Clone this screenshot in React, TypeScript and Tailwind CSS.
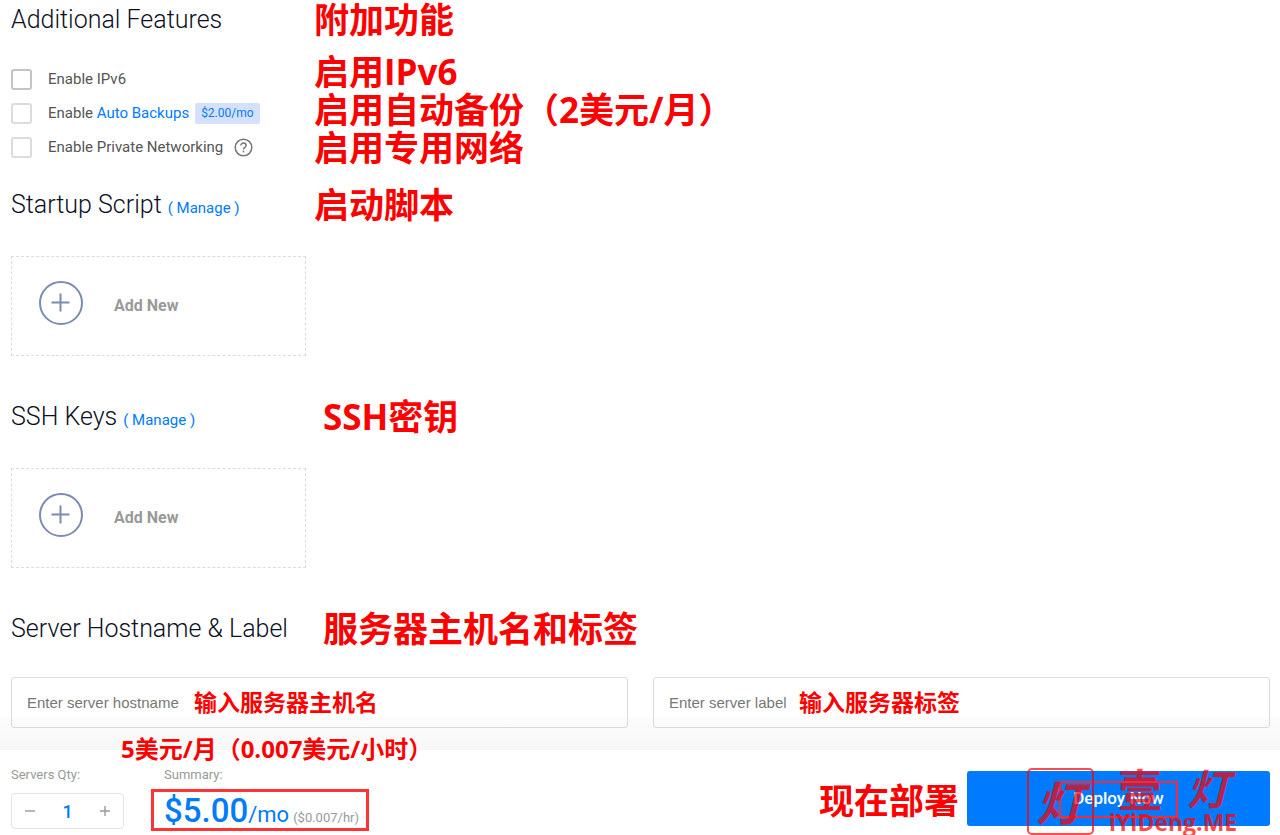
import { useState } from 'react';
import type { ReactNode } from 'react';

const features = [
  { id: 'ipv6', text: 'IPv6', border: 'border-[#c4c4c4]' },
  { id: 'backups', link: 'Auto Backups', badge: '$2.00/mo', border: 'border-[#dcdcdc]' },
  { id: 'private', text: 'Private Networking', help: true, border: 'border-[#dcdcdc]' },
];

const featureNotes = ['启用IPv6', '启用自动备份（2美元/月）', '启用专用网络'];

const noteSizes = {
  lg: 'text-[35px] leading-[38px]',
  md: 'text-[24px] leading-[28px]',
  sm: 'text-[23px] leading-[28px]',
};

function Note({
  size = 'lg',
  className = '',
  children,
}: {
  size?: keyof typeof noteSizes;
  className?: string;
  children: ReactNode;
}) {
  return (
    <span
      className={`whitespace-nowrap font-['Open_Sans','Noto_Sans_CJK_SC',sans-serif] font-bold text-[#ff0000] ${noteSizes[size]} ${className}`}
    >
      {children}
    </span>
  );
}

function SectionHeading({
  title,
  note,
  manage,
  width = 'w-[303px]',
}: {
  title: string;
  note: string;
  manage?: boolean;
  width?: string;
}) {
  return (
    <div className="flex h-10 items-center">
      <div className={`flex shrink-0 items-baseline gap-1.5 ${width}`}>
        <h2 className="whitespace-nowrap text-[25px] leading-10 font-[350] text-[#0c1024]">{title}</h2>
        {manage && (
          <a href="#manage" className="whitespace-nowrap text-[15px] text-[#007bfc]">
            ( Manage )
          </a>
        )}
      </div>
      <Note>{note}</Note>
    </div>
  );
}

function HelpIcon() {
  return (
    <svg className="ml-[11px] size-[19px]" viewBox="0 0 19 19" fill="none" stroke="#777" strokeWidth="1.5">
      <circle cx="9.5" cy="9.5" r="8.3" />
      <path d="M6.9 7.6c0-1.5 1.1-2.5 2.6-2.5s2.6.9 2.6 2.3c0 2-2.6 2-2.6 4.1" />
      <path d="M9.5 12.7v1.7" />
    </svg>
  );
}

function AddNew() {
  return (
    <button
      type="button"
      className="mt-[31px] mb-[41px] flex h-[100px] w-[295px] items-start gap-[31px] border border-dashed border-[#dcdcdc] pt-6 pl-[27px]"
    >
      <svg className="size-[44px]" viewBox="0 0 44 44" fill="none" stroke="#7b8cb0" strokeWidth="2">
        <circle cx="22" cy="22" r="21" />
        <path d="M12.5 21.5h18M21.5 12.5v18" />
      </svg>
      <span className="text-[16px] leading-[50px] font-bold text-[#999]">Add New</span>
    </button>
  );
}

function HostField({ id, label, note, noteClass }: { id: string; label: string; note: string; noteClass: string }) {
  return (
    <div className="relative">
      <input
        id={id}
        aria-label={label}
        placeholder={label}
        className="block h-[51px] w-full rounded-[3px] border border-[#dcdcdc] bg-white px-[15px] font-['Liberation_Sans',sans-serif] text-[15px] text-[#444] placeholder:text-[#777]"
      />
      <Note size="sm" className={`pointer-events-none absolute top-[11px] ${noteClass}`}>
        {note}
      </Note>
    </div>
  );
}

function Watermark() {
  return (
    <svg
      className="pointer-events-none absolute top-[-4px] left-[58px] h-[72px] w-[226px]"
      viewBox="0 0 226 72"
      aria-hidden="true"
    >
      <rect x="35" y="15" width="117" height="35" fill="none" stroke="#f52b36" strokeWidth="2" />
      <g opacity="0.7" fill="#ff0000" fontFamily="'Noto Sans CJK SC', sans-serif" fontWeight="700">
        <rect x="3" y="2" width="65" height="65" rx="4" fill="none" stroke="#ff0000" strokeWidth="2" />
        <text x="11" y="54" fontSize="47" fontStyle="italic">灯</text>
        <text x="93" y="40" fontSize="44">壹</text>
        <text x="162" y="38" fontSize="42" fontStyle="italic">灯</text>
        <text x="84" y="64" fontSize="23" fontFamily="'Open Sans', sans-serif">
          iYiDeng.ME
        </text>
      </g>
    </svg>
  );
}

export default function App() {
  const [qty, setQty] = useState(1);

  return (
    <div className="flex min-h-screen flex-col overflow-hidden bg-white font-[Roboto,sans-serif]">
      <main className="flex-1 pr-2.5 pb-[22px] pl-[11px]">
        <SectionHeading title="Additional Features" note="附加功能" />
        <div className="flex h-[145px]">
          <div className="w-[303px] shrink-0 pt-[22px]">
            {features.map((f) => (
              <div key={f.id} className="flex h-[34px] items-center text-[15px] text-[#555]">
                <input
                  id={f.id}
                  type="checkbox"
                  className={`mr-4 size-[21px] shrink-0 appearance-none rounded-[3px] border-2 bg-white checked:bg-[#007bfc] ${f.border}`}
                />
                <label htmlFor={f.id} className="whitespace-nowrap">
                  Enable {f.text}
                  {f.link && (
                    <a href="#backups" className="text-[#007bfc]">
                      {f.link}
                    </a>
                  )}
                </label>
                {f.badge && (
                  <span className="ml-1.5 rounded-xs bg-[#d5e1fa] px-1.5 text-[12px] leading-[21px] text-[#007bfc]">
                    {f.badge}
                  </span>
                )}
                {f.help && <HelpIcon />}
              </div>
            ))}
          </div>
          <div className="flex flex-col pt-[13px]">
            {featureNotes.map((n) => (
              <Note key={n}>{n}</Note>
            ))}
          </div>
        </div>

        <SectionHeading title="Startup Script" note="启动脚本" manage />
        <AddNew />

        <SectionHeading title="SSH Keys" note="SSH密钥" manage width="w-[312px]" />
        <AddNew />

        <SectionHeading title="Server Hostname & Label" note="服务器主机名和标签" width="w-[312px]" />
        <div className="mt-7 grid grid-cols-2 gap-[25px]">
          <HostField id="hostname" label="Enter server hostname" note="输入服务器主机名" noteClass="left-[183px]" />
          <HostField id="label" label="Enter server label" note="输入服务器标签" noteClass="left-[146px]" />
        </div>
      </main>

      <footer className="relative flex h-[85px] items-start bg-white pr-2.5 pl-[11px]">
        {/* soft shade cast on the page above the bar */}
        <div className="pointer-events-none absolute inset-x-0 bottom-full h-8 bg-linear-to-b from-black/[0.015] to-black/[0.03]" />
        <Note size="md" className="absolute top-[-15px] left-[121px]">
          5美元/月（0.007美元/小时）
        </Note>

        <div className="w-[140px] pt-4">
          <label htmlFor="qty" className="block text-[13px] leading-[18px] text-[#999]">
            Servers Qty:
          </label>
          <div className="mt-[9px] flex h-9 w-[113px] items-center rounded-[4px] border border-[#e3e3e3] text-[#999]">
            <button type="button" aria-label="Decrease" className="flex w-9 justify-center" onClick={() => setQty(Math.max(1, qty - 1))}>
              <svg className="size-3" viewBox="0 0 12 12" stroke="currentColor" strokeWidth="1.4">
                <path d="M1 6h10" />
              </svg>
            </button>
            <input
              id="qty"
              value={qty}
              readOnly
              className="min-w-0 flex-1 text-center text-[18px] font-medium text-[#007bfc]"
            />
            <button type="button" aria-label="Increase" className="flex w-9 justify-center" onClick={() => setQty(qty + 1)}>
              <svg className="size-3" viewBox="0 0 12 12" stroke="currentColor" strokeWidth="1.4">
                <path d="M1 6h10M6 1v10" />
              </svg>
            </button>
          </div>
        </div>

        <div className="pt-4">
          <div className="pl-[13px] text-[13px] leading-[18px] text-[#999]">Summary:</div>
          <div className="mt-[5px] flex h-[42px] w-[218px] items-baseline border-3 border-[#f33] pl-2.5 whitespace-nowrap text-[#007bfc]">
            <span className="text-[33px] leading-[38px] font-medium">$5.00</span>
            <span className="text-[22px]">/mo</span>
            <span className="ml-1 text-[13px] text-[#999]">($0.007/hr)</span>
          </div>
        </div>

        <div className="ml-auto flex items-center gap-2 pt-[21px]">
          <Note className="pt-1">现在部署</Note>
          <div className="relative">
            <button
              type="button"
              className="h-[55px] w-[303px] rounded-[3px] bg-[#007bff] text-[17px] font-medium text-white"
            >
              Deploy Now
            </button>
            <Watermark />
          </div>
        </div>
      </footer>
    </div>
  );
}
